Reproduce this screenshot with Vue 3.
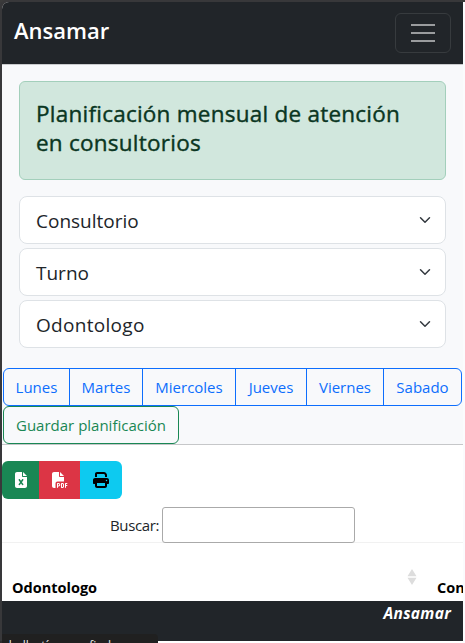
<script setup>
const selects = ['Consultorio', 'Turno', 'Odontologo']
const days = [
  { name: 'Lunes', w: 67 },
  { name: 'Martes', w: 74 },
  { name: 'Miercoles', w: 94 },
  { name: 'Jueves', w: 72 },
  { name: 'Viernes', w: 78 },
  { name: 'Sabado', w: 79 },
]
</script>

<template>
  <div class="frame">
    <div class="page">
      <nav class="navbar">
        <span class="brand">Ansamar</span>
        <button class="toggler" aria-label="Menu">
          <svg width="30" height="30" viewBox="0 0 30 30"><path stroke="#fff" stroke-opacity=".55" stroke-width="2" d="M3 7h24M3 15h24M3 23h24" /></svg>
        </button>
      </nav>
      <section class="planner">
        <div class="fields">
          <div class="alert"><h4>Planificación mensual de atención<br />en consultorios</h4></div>
          <div v-for="s in selects" :key="s" class="select">
            <span :class="s.toLowerCase()">{{ s }}</span>
            <svg class="chevron" width="16" height="12" viewBox="0 0 16 16"><path fill="none" stroke="#343a40" stroke-linecap="round" stroke-linejoin="round" stroke-width="2" d="m2 5 6 6 6-6" /></svg>
          </div>
        </div>
        <div class="days">
          <button v-for="d in days" :key="d.name" :style="{ width: d.w + 'px' }">{{ d.name }}</button>
        </div>
        <button class="save">Guardar planificación</button>
      </section>
      <section class="results">
        <div class="exports">
          <button class="excel" aria-label="Excel">
            <svg width="12" height="16" viewBox="0 0 384 512"><path fill="#fff" fill-rule="evenodd" d="M64 0C29 0 0 29 0 64v384c0 35 29 64 64 64h256c35 0 64-29 64-64V160H256c-18 0-32-14-32-32V0H64zm192 0v128h128L256 0zM156 234l36 48 36-48c8-10 23-12 34-4s12 23 4 34l-44 60 44 60c8 10 6 25-4 33s-26 6-34-4l-36-49-36 49c-8 10-23 12-34 4s-12-23-4-33l44-60-44-60c-8-11-6-26 4-34s26-6 34 4z" /></svg>
          </button>
          <button class="pdf" aria-label="PDF">
            <svg width="16" height="16" viewBox="0 0 512 512"><path fill="#fff" d="M0 64C0 29 29 0 64 0h160v128c0 18 14 32 32 32h128v144H176c-35 0-64 29-64 64v144H64c-35 0-64-29-64-64V64zm384 64H256V0l128 128z" /><path fill="#fff" fill-rule="evenodd" d="M176 352h32c31 0 56 25 56 56s-25 56-56 56h-16v32c0 21-32 21-32 0V368c0-9 7-16 16-16zm32 80c32 0 32-48 0-48h-16v48h16zm96-80h32c26 0 48 22 48 48v64c0 26-22 48-48 48h-32c-9 0-16-7-16-16V368c0-9 7-16 16-16zm32 128c9 0 16-7 16-16v-64c0-9-7-16-16-16h-16v96h16zm80-112c0-9 7-16 16-16h48c21 0 21 32 0 32h-32v32h32c21 0 21 32 0 32h-32v48c0 21-32 21-32 0V368z" /></svg>
          </button>
          <button class="print" aria-label="Imprimir">
            <svg width="16" height="16" viewBox="0 0 512 512"><path fill="#000" fill-rule="evenodd" d="M128 0C93 0 64 29 64 64v96h64V64h227l29 29v67h64V93c0-17-7-33-19-45L400 19C388 7 372 0 355 0H128zm256 352v96H128v-96h256zm64 32h32c18 0 32-14 32-32v-96c0-35-29-64-64-64H64c-35 0-64 29-64 64v96c0 18 14 32 32 32h32v64c0 35 29 64 64 64h256c35 0 64-29 64-64v-64zm-16-88a24 24 0 1 1 0-48 24 24 0 0 1 0 48z" /></svg>
          </button>
        </div>
        <label class="search"><span>Buscar:</span><input type="text" /></label>
        <div class="thead">
          <span class="th">Odontologo</span>
          <svg class="sort" width="10" height="16" viewBox="0 0 10 16"><path fill="#ddd" d="M.5 7.3 5 0l4.500 7.300zM.5 8.700h9L5 16z" /></svg>
          <span class="th next">Consultorio</span>
        </div>
      </section>
      <footer>Ansamar</footer>
      <div class="status">aballestí.gov.ar.find</div>
    </div>
  </div>
</template>

<style>
body { background: #fff; overflow: hidden; }
</style>

<style scoped>
* { box-sizing: border-box; }
.frame { width: 465px; height: 643px; padding: 2px 2px 0 2px; overflow: hidden; background: linear-gradient(#3b3b3b, #3b3b3b) 0 0 / 100% 2px no-repeat, linear-gradient(#3a3a3b, #2e2e30) 0 0 / 2px 100% no-repeat, #fbfbfd; font: 15px/24px "Open Sans", "Noto Sans", sans-serif; color: #212529; }
.page { position: relative; width: 461px; height: 641px; overflow: hidden; background: #fff; border-top-left-radius: 7px; box-shadow: -2px -2px 0 #38383a; }
.navbar { height: 62px; background: #212529; display: flex; justify-content: space-between; align-items: center; padding: 0 12px; }
.brand { color: #fff; font-size: 22px; font-weight: 600; line-height: 30px; padding-bottom: 6px; }
button { font: inherit; margin: 0; }
.toggler { width: 56px; height: 40px; padding: 0; border: 1px solid #373b3e; border-radius: 6px; background: transparent; display: flex; align-items: center; justify-content: center; }
.planner { height: 381px; background: #f8f9fb; border-top: 1px solid #c9cbcd; border-bottom: 1px solid #c6c7c9; }
.fields { padding: 16px 17px 20px; display: flex; flex-direction: column; gap: 4px; }
.alert { height: 99px; padding: 17px 16px 15px; margin-bottom: 12px; border: 1px solid #a3cfbb; border-radius: 6px; background: #d1e7dd; }
h4 { margin: 0; color: #0a3622; font-size: 22.500px; line-height: 29px; font-weight: 500; letter-spacing: .24px; -webkit-text-stroke: .4px #0a3622; white-space: nowrap; }
.select { height: 48px; border: 1px solid #dee2e6; border-radius: 8px; background: #fff; display: flex; align-items: center; justify-content: space-between; padding: 1px 12px 0 16px; font-size: 19px; }
.odontologo { letter-spacing: .3px; }
.chevron { margin-bottom: 2px; }
.days { display: flex; padding-left: 1px; }
.days button { height: 38px; flex: none; padding: 0; border: 1px solid #0d6efd; color: #0d6efd; background: transparent; }
.days button + button { margin-left: -1px; }
.days button:first-child { border-radius: 6px 0 0 6px; }
.days button:last-child { border-radius: 0 6px 6px 0; }
.save { display: block; margin-left: 1px; width: 176px; height: 38px; padding: 0; border: 1px solid #198754; border-radius: 6px; color: #198754; background: transparent; white-space: nowrap; }
.results { height: 156px; padding-top: 16px; overflow: hidden; }
.exports { display: flex; width: 120px; height: 38px; border-radius: 6px; overflow: hidden; }
.exports button { border: 0; padding: 0; display: flex; align-items: center; justify-content: center; }
.excel { width: 37px; background: #198754; }
.pdf { width: 41px; background: #dc3545; }
.print { width: 42px; background: #0dcaf0; }
.search { display: flex; align-items: center; margin: 8px 0 0 108px; height: 36px; }
.search span { width: 52px; letter-spacing: -.35px; }
.search input { width: 193px; height: 36px; border: 1px solid #aaa; border-radius: 3px; background: transparent; }
.thead { margin-top: -1px; border-top: 1px solid #f1f1f1; height: 60px; padding: 27px 0 0 10px; display: flex; align-items: flex-start; color: #000; font-weight: 700; font-size: 14.500px; }
.th { width: 396px; line-height: 36px; flex: none; }
.sort { margin: -1px 0 0 -1px; flex: none; }
.next { margin-left: 20px; }
footer { height: 40px; background: #212529; color: #fff; font-weight: 700; font-style: italic; font-size: 15.500px; letter-spacing: .3px; text-align: right; padding-right: 12px; line-height: 25px; }
.status { position: absolute; left: 0; bottom: 0; width: 156px; height: 9px; overflow: hidden; background: #202020; color: #e8e8e8; border-top-right-radius: 4px; font-size: 12px; line-height: 24px; white-space: nowrap; }
</style>
